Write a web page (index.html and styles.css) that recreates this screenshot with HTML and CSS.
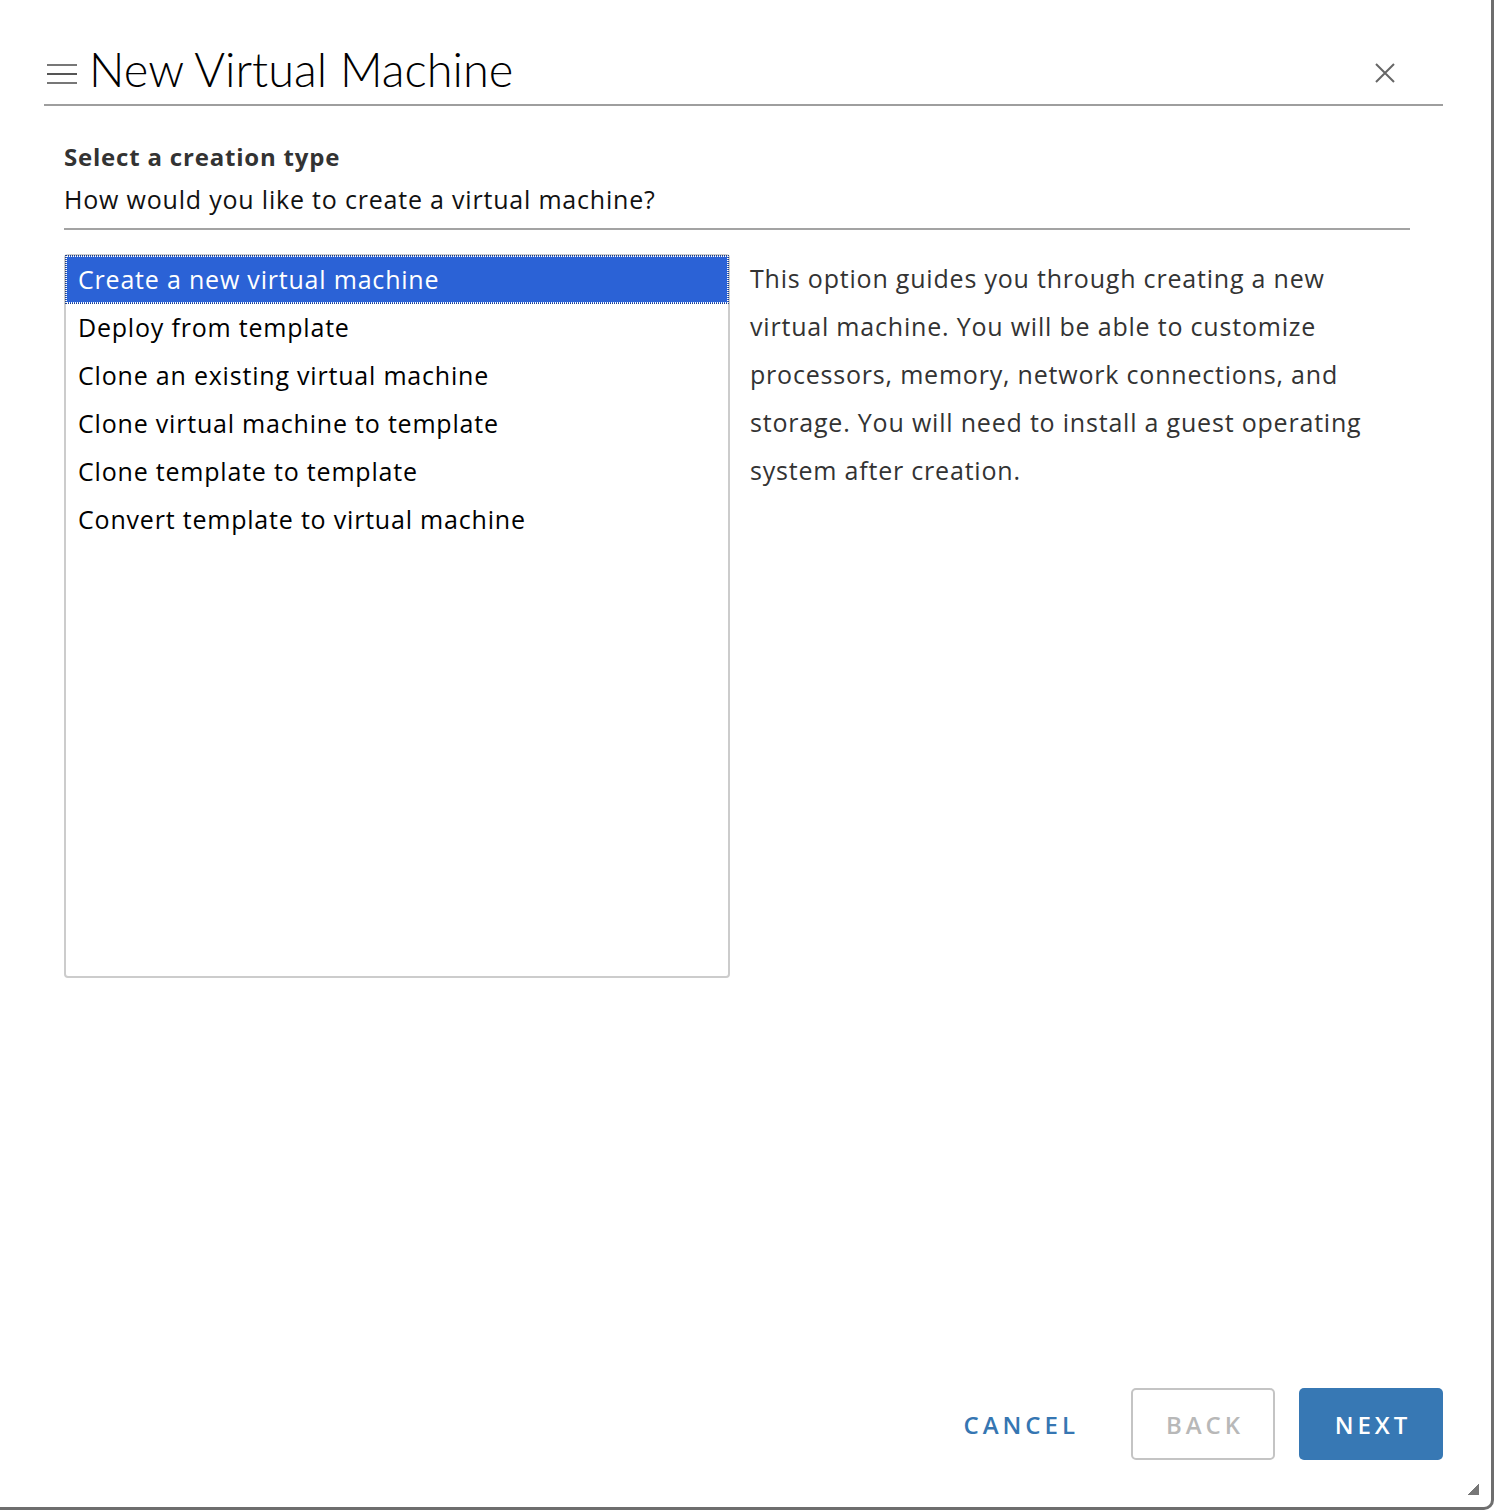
FILE: index.html
```html
<!DOCTYPE html>
<html>
<head>
<meta charset="utf-8">
<link rel="stylesheet" href="styles.css">
</head>
<body>
<div class="window">
  <header class="header">
    <svg class="menu-icon" width="30" height="22" viewBox="0 0 30 22">
      <rect x="0" y="1" width="30" height="2" fill="#777"/>
      <rect x="0" y="10" width="30" height="2" fill="#555"/>
      <rect x="0" y="19" width="30" height="2" fill="#777"/>
    </svg>
    <h1 class="title">New Virtual Machine</h1>
    <svg class="close-icon" width="22" height="22" viewBox="0 0 22 22">
      <path d="M2 2 L20 20 M20 2 L2 20" stroke="#666" stroke-width="2" fill="none"/>
    </svg>
  </header>
  <section class="content">
    <div class="step-title">Select a creation type</div>
    <div class="step-desc">How would you like to create a virtual machine?</div>
    <div class="panes">
      <ul class="listbox">
        <li class="item selected">Create a new virtual machine</li>
        <li class="item">Deploy from template</li>
        <li class="item">Clone an existing virtual machine</li>
        <li class="item">Clone virtual machine to template</li>
        <li class="item">Clone template to template</li>
        <li class="item">Convert template to virtual machine</li>
      </ul>
      <p class="description">This option guides you through creating a new virtual machine. You will be able to customize processors, memory, network connections, and storage. You will need to install a guest operating system after creation.</p>
    </div>
  </section>
  <footer class="footer">
    <button class="btn btn-link">CANCEL</button>
    <button class="btn btn-outline" disabled>BACK</button>
    <button class="btn btn-primary">NEXT</button>
  </footer>
  <div class="grip"></div>
</div>
</body>
</html>
```
FILE: styles.css
```css
html, body {
  margin: 0;
  padding: 0;
  background: #ffffff;
}
body {
  font-family: "Open Sans", "Noto Sans", sans-serif;
  color: #000;
}
.window {
  position: relative;
  box-sizing: border-box;
  width: 1494px;
  height: 1510px;
  background: #fff;
  border-right: 3px solid #6e6e6e;
  border-bottom: 3px solid #6e6e6e;
  border-bottom-right-radius: 10px;
  display: flex;
  flex-direction: column;
  overflow: hidden;
}
.header {
  display: flex;
  align-items: center;
  margin: 0 48px 0 44px;
  height: 106px;
  border-bottom: 2px solid #9e9e9e;
  box-sizing: border-box;
  padding-top: 48px;
  padding-bottom: 14px;
}
.menu-icon {
  margin-left: 3px;
  margin-right: 12px;
  margin-top: 10px;
}
.title {
  margin: 0;
  font-family: "Lato", "Open Sans", sans-serif;
  font-weight: 300;
  font-size: 47px;
  line-height: 42px;
  color: #000;
  flex: 1;
}
.close-icon {
  margin-right: 47px;
  margin-top: 8px;
}
.content {
  padding: 0 81px 0 64px;
  flex: 1;
}
.step-title {
  margin-top: 36px;
  font-size: 24px;
  font-weight: 700;
  letter-spacing: 0.8px;
  color: #333;
  line-height: 30px;
}
.step-desc {
  margin-top: 12px;
  font-size: 25px;
  letter-spacing: 0.8px;
  color: #111;
  line-height: 30px;
  padding-bottom: 14px;
  border-bottom: 2px solid #a3a3a3;
}
.panes {
  display: flex;
  margin-top: 24px;
}
.listbox {
  list-style: none;
  margin: 0;
  padding: 0;
  width: 666px;
  height: 724px;
  box-sizing: border-box;
  border: 2px solid #cccccc;
  border-radius: 4px;
  flex-shrink: 0;
}
.item {
  height: 48px;
  line-height: 48px;
  padding-left: 12px;
  font-size: 25px;
  letter-spacing: 0.8px;
  color: #000;
  box-sizing: border-box;
  white-space: nowrap;
}
.item.selected {
  background: #2b62d6;
  color: #fff;
  border: 1px dotted #ffffff;
  outline: 1px dotted #1d3f8a;
  line-height: 44px;
  height: 47px;
  padding-left: 11px;
}
.description {
  margin: 0 0 0 20px;
  font-size: 25px;
  letter-spacing: 0.8px;
  line-height: 48px;
  color: #333;
  max-width: 630px;
}
.footer {
  display: flex;
  justify-content: flex-end;
  align-items: center;
  gap: 24px;
  padding: 0 48px 47px 0;
}
.btn {
  font-family: "Open Sans", "Noto Sans", sans-serif;
  font-size: 24px;
  font-weight: 600;
  letter-spacing: 4px;
  height: 72px;
  border-radius: 5px;
  box-sizing: border-box;
  padding: 0 0 0 4px;
  width: 144px;
}
.btn-link {
  background: none;
  border: none;
  color: #3676b2;
  width: auto;
  margin-right: 28px;
}
.btn-outline {
  background: #fff;
  border: 2px solid #c4c4c4;
  color: #b8b8b8;
}
.btn-primary {
  background: #3778b4;
  border: none;
  color: #fff;
}
.grip {
  position: absolute;
  right: 12px;
  bottom: 12px;
  width: 12px;
  height: 12px;
  background: linear-gradient(135deg, transparent 50%, #777 50%);
}
```
